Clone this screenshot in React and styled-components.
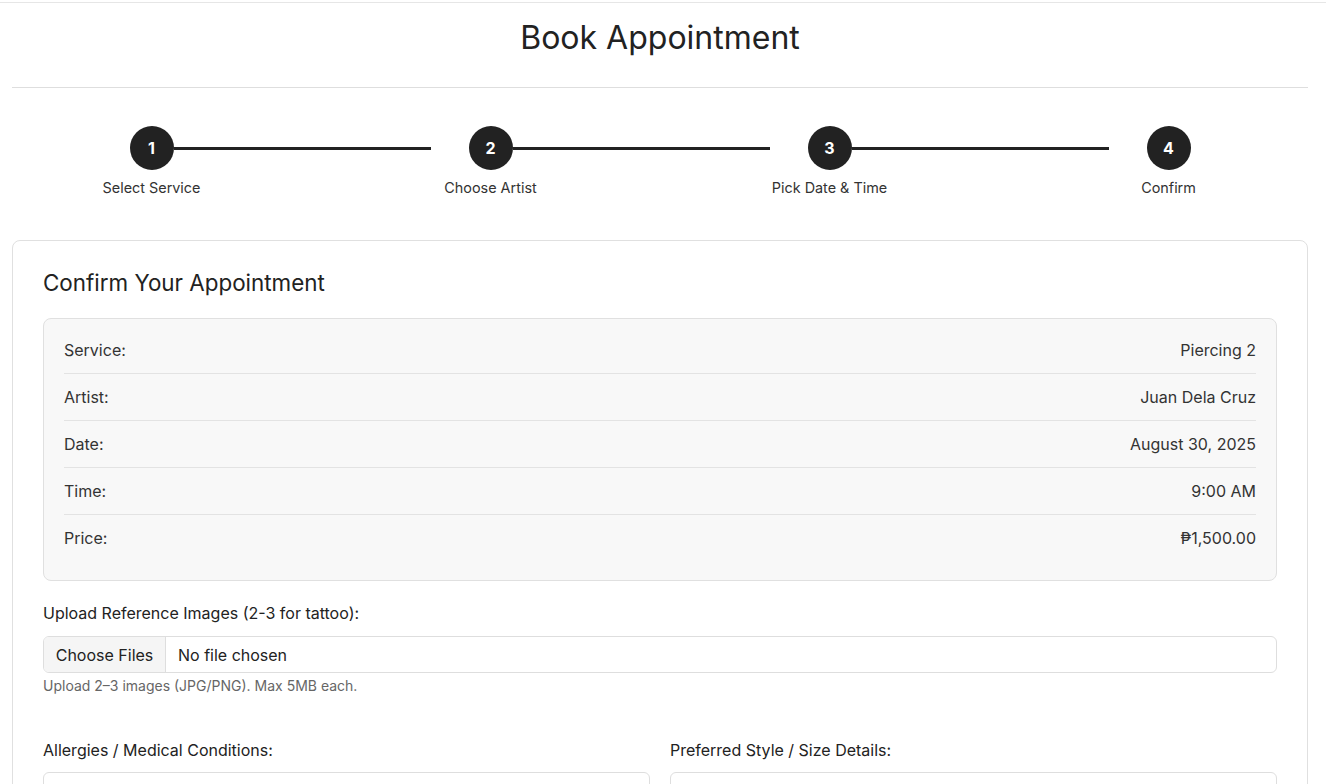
import React from "react";
import styled, { createGlobalStyle } from "styled-components";

const Global = createGlobalStyle`
  html, body { margin: 0; padding: 0; background: #fff; }
  body { font-family: Inter, "Noto Sans", "Liberation Sans", sans-serif; color: #222; }
  * { box-sizing: border-box; }
`;

const Page = styled.div`
  margin-top: 2px;
  border-top: 1px solid #e6e6e6;
  padding: 0 18px 0 12px;
`;

const Header = styled.header`
  padding: 15px 0 29px;
  border-bottom: 1px solid #dedede;
  text-align: center;
`;

const Title = styled.h1`
  margin: 0;
  font-size: 32px;
  line-height: 40px;
  font-weight: 400;
  color: #222;
`;

const Stepper = styled.div`
  display: flex;
  justify-content: center;
  align-items: flex-start;
  margin: 38px 0 43px;
`;

const Step = styled.div`
  width: 44px;
  display: flex;
  flex-direction: column;
  align-items: center;
`;

const Circle = styled.div`
  width: 44px;
  height: 44px;
  border-radius: 50%;
  background: #222;
  color: #fff;
  font-weight: 700;
  font-size: 16px;
  display: flex;
  align-items: center;
  justify-content: center;
`;

const StepLabel = styled.div`
  margin-top: 9px;
  font-size: 14.4px;
  line-height: 18px;
  color: #333;
  white-space: nowrap;
`;

const Connector = styled.div`
  width: 257px;
  height: 3px;
  margin-top: 21px;
  margin-right: 38px;
  background: #222;
`;

const Card = styled.section`
  border: 1px solid #e0e0e0;
  border-radius: 8px;
  padding: 30px 30px 0;
`;

const CardTitle = styled.h2`
  margin: 0 0 23px;
  font-size: 22.4px;
  line-height: 24px;
  font-weight: 400;
  color: #222;
`;

const Summary = styled.div`
  background: #f8f8f8;
  border: 1px solid #e0e0e0;
  border-radius: 8px;
  padding: 8px 20px 18px;
`;

const SummaryRow = styled.div`
  display: flex;
  justify-content: space-between;
  padding: 12px 0;
  font-size: 16px;
  line-height: 22px;
  color: #333;
  border-bottom: 1px solid ${(p) => (p.$last ? "transparent" : "#e3e3e3")};
`;

const Field = styled.div`
  margin-top: ${(p) => p.$top || 0}px;
  display: flex;
  flex-direction: column;
`;

const Label = styled.label`
  font-size: 16px;
  line-height: 20px;
  color: #222;
  margin-bottom: ${(p) => p.$gap || 12}px;
`;

const FileBox = styled.div`
  display: flex;
  height: 37px;
  border: 1px solid #dedede;
  border-radius: 6px;
  overflow: hidden;
  font-size: 16px;
  color: #222;
`;

const FileButton = styled.div`
  width: 122px;
  background: #f5f5f5;
  border-right: 1px solid #dedede;
  display: flex;
  align-items: center;
  justify-content: center;
`;

const FileText = styled.div`
  display: flex;
  align-items: center;
  padding-left: 12px;
`;

const Hint = styled.div`
  margin-top: 5px;
  font-size: 14px;
  line-height: 16px;
  color: #666;
`;

const Columns = styled.div`
  margin-top: 46px;
  display: grid;
  grid-template-columns: 1fr 1fr;
  gap: 20px;
`;

const TextArea = styled.textarea`
  height: 100px;
  border: 1px solid #dedede;
  border-radius: 6px;
  resize: vertical;
  font-family: inherit;
  font-size: 16px;
  padding: 10px 12px;
`;

const steps = ["Select Service", "Choose Artist", "Pick Date & Time", "Confirm"];
const rows = [
  ["Service:", "Piercing 2"],
  ["Artist:", "Juan Dela Cruz"],
  ["Date:", "August 30, 2025"],
  ["Time:", "9:00 AM"],
  ["Price:", "₱1,500.00"],
];

export default function App() {
  return (
    <>
      <Global />
      <Page>
        <Header>
          <Title>Book Appointment</Title>
        </Header>
        <Stepper>
          {steps.map((s, i) => (
            <React.Fragment key={s}>
              <Step>
                <Circle>{i + 1}</Circle>
                <StepLabel>{s}</StepLabel>
              </Step>
              {i < steps.length - 1 && <Connector />}
            </React.Fragment>
          ))}
        </Stepper>
        <Card>
          <CardTitle>Confirm Your Appointment</CardTitle>
          <Summary>
            {rows.map(([k, v], i) => (
              <SummaryRow key={k} $last={i === rows.length - 1}>
                <span>{k}</span>
                <span>{v}</span>
              </SummaryRow>
            ))}
          </Summary>
          <Field $top={22}>
            <Label $gap={13}>Upload Reference Images (2-3 for tattoo):</Label>
            <FileBox>
              <FileButton>Choose Files</FileButton>
              <FileText>No file chosen</FileText>
            </FileBox>
            <Hint>Upload 2–3 images (JPG/PNG). Max 5MB each.</Hint>
          </Field>
          <Columns>
            <Field>
              <Label>Allergies / Medical Conditions:</Label>
              <TextArea />
            </Field>
            <Field>
              <Label>Preferred Style / Size Details:</Label>
              <TextArea />
            </Field>
          </Columns>
        </Card>
      </Page>
    </>
  );
}
